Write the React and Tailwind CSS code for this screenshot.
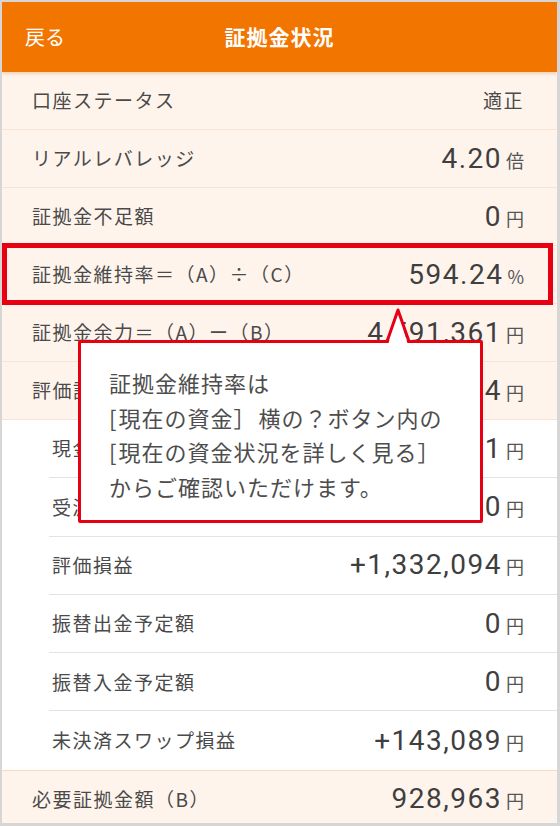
import React from 'react';

const jp = { fontFamily: '"Noto Sans CJK JP", "Noto Sans", sans-serif' };
const num = { fontFamily: 'Roboto, "Noto Sans CJK JP", sans-serif' };

const topRows = [
  { label: '口座ステータス', text: '適正' },
  { label: 'リアルレバレッジ', value: '4.20', unit: '倍' },
  { label: '証拠金不足額', value: '0', unit: '円' },
  { label: '証拠金維持率＝（A）÷（C）', value: '594.24', unit: '%' },
  { label: '証拠金余力＝（A）ー（B）', value: '4,591,361', unit: '円' },
  { label: '評価証拠金額（A）', value: '5,520,324', unit: '円' },
];

const subRows = [
  { label: '現金残高', value: '4,045,141' },
  { label: '受渡待ち金額', value: '0' },
  { label: '評価損益', value: '+1,332,094' },
  { label: '振替出金予定額', value: '0' },
  { label: '振替入金予定額', value: '0' },
  { label: '未決済スワップ損益', value: '+143,089' },
];

const Value = ({ value, unit, text }) => {
  if (text) {
    return <span className="text-[19px] tracking-[1.5px] text-[#4a4a4a]" style={jp}>{text}</span>;
  }
  return (
    <span className="flex items-baseline">
      <span className="text-[28px] font-normal tracking-[1.5px] text-[#3f3f3f]" style={num}>{value}</span>
      <span className="ml-[4px] text-[18px] text-[#555]" style={jp}>{unit}</span>
    </span>
  );
};

export default function App() {
  return (
    <div className="relative w-[560px] h-[826px] overflow-hidden border-[#d6d6d6] border-l-2 border-t-2 border-r-[3px] border-b-[3px] bg-white" style={jp}>
      <div className="flex flex-col">
        {/* header */}
        <div className="relative z-10 h-[70px] bg-[#f27500] flex items-center justify-center shadow-[0_2px_3px_rgba(200,110,40,0.25)]">
          <span className="absolute left-[23px] text-[20px] text-white">戻る</span>
          <span className="text-[21px] font-bold text-white tracking-[1px]">証拠金状況</span>
        </div>

        <div className="bg-[#fff4ec]">
          {topRows.map((r) => (
            <div key={r.label} className="h-[58px] border-b border-[#fbe3d2] flex items-center justify-between pl-[30px] pr-[33px]">
              <span className="text-[19px] tracking-[1.5px] text-[#4a4a4a]">{r.label}</span>
              <Value {...r} />
            </div>
          ))}
        </div>

        <div className="bg-white">
          {subRows.map((r, i) => (
            <div
              key={r.label}
              className={`h-[58.3px] ml-[47px] pl-[3px] pr-[33px] flex items-center justify-between ${i < subRows.length - 1 ? 'border-b border-[#e3e3e3]' : ''}`}
            >
              <span className="text-[19px] tracking-[1.5px] text-[#4a4a4a]">{r.label}</span>
              <Value value={r.value} unit="円" />
            </div>
          ))}
        </div>

        <div className="h-[58px] bg-[#fff4ec] border-t border-[#fbd9bf] flex items-center justify-between pl-[30px] pr-[33px]">
          <span className="text-[19px] tracking-[1.5px] text-[#4a4a4a]">必要証拠金額（B）</span>
          <Value value="928,963" unit="円" />
        </div>
      </div>

      {/* highlight frame */}
      <div className="absolute left-0 top-[241px] w-[551px] h-[62px] border-[5px] border-[#e60012]" />

      {/* callout */}
      <div className="absolute left-[76px] top-[338px] w-[405px] h-[183px] bg-white border-[3px] border-[#e60012] rounded-[2px] pl-[28px] pt-[22px]">
        <p className="text-[22px] leading-[34.5px] tracking-[1px] text-[#4d4d4d]">
          証拠金維持率は<br />
          <span className="mr-[1px]">[</span>現在の資金<span className="mr-[2px]">］</span>横の？ボタン内の<br />
          <span className="mr-[1px]">[</span>現在の資金状況を詳しく見る<span>］</span><br />
          からご確認いただけます。
        </p>
      </div>
      <svg className="absolute left-[378px] top-[303px]" width="36" height="42" viewBox="0 0 36 42">
        <polygon points="8,40 18,5 28,40" fill="#fff" />
        <polyline points="7,36.5 18,5 29,36.5" fill="none" stroke="#e60012" strokeWidth="3" strokeLinejoin="round" />
      </svg>
    </div>
  );
}
